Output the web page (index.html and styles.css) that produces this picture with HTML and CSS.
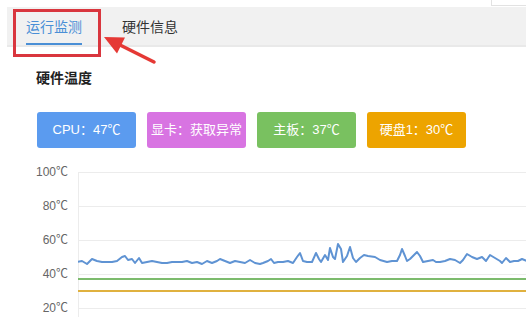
FILE: index.html
```html
<!DOCTYPE html>
<html lang="zh">
<head>
<meta charset="utf-8">
<link rel="stylesheet" href="styles.css">
</head>
<body>
<div class="page">
  <div class="corner-box"></div>
  <div class="tabs">
    <div class="tab active">运行监测</div>
    <div class="tab">硬件信息</div>
  </div>
  <div class="content">
    <h3 class="title">硬件温度</h3>
    <div class="badges">
      <div class="badge b-blue">CPU：47℃</div>
      <div class="badge b-purple">显卡：获取异常</div>
      <div class="badge b-green">主板：37℃</div>
      <div class="badge b-orange">硬盘1：30℃</div>
    </div>
  </div>
  <div class="chart">
    <div class="ylabels">
      <div>100℃</div>
      <div>80℃</div>
      <div>60℃</div>
      <div>40℃</div>
      <div>20℃</div>
    </div>
    <svg class="plot" width="448" height="170" viewBox="0 0 448 170">
      <g stroke="#ececec" stroke-width="1">
        <line x1="0" y1="17.5" x2="448" y2="17.5"/>
        <line x1="0" y1="51.5" x2="448" y2="51.5"/>
        <line x1="0" y1="85.5" x2="448" y2="85.5"/>
        <line x1="0" y1="119.5" x2="448" y2="119.5"/>
        <line x1="0" y1="153.5" x2="448" y2="153.5"/>
        <line x1="0.5" y1="17" x2="0.5" y2="170"/>
      </g>
      <line x1="0" y1="124" x2="448" y2="124" stroke="#7cbb6d" stroke-width="2"/>
      <line x1="0" y1="136" x2="448" y2="136" stroke="#e0b13f" stroke-width="2"/>
      <polyline fill="none" stroke="#5f93d3" stroke-width="2" stroke-linejoin="round"
        points="-1,107 4,106 9,109 14,104 19,106 24,107 34,107 39,106 44,102 47,101 50,105 54,104 57,108 61,103 64,108 69,107 74,106 79,107 84,108 89,108 94,107 104,107 109,106 114,108 119,107 124,109 129,106 134,108 139,106 142,104 147,106 152,108 157,106 162,107 167,108 172,105 177,108 182,109 185,108 190,106 193,104 196,108 200,107 205,107 210,106 215,108 219,102 222,98 225,106 229,107 234,107 238,98 241,104 243,107 247,100 250,105 252,93 255,102 257,104 260,89 263,94 265,107 269,101 272,92 275,103 278,107 282,103 286,100 290,101 297,102 302,105 309,107 314,106 319,106 322,100 324,94 327,101 329,106 332,104 336,100 339,97 342,101 345,107 350,106 355,105 358,107 362,107 367,106 372,104 377,105 382,108 385,105 389,99 394,102 399,104 404,102 408,106 412,100 417,103 422,106 424,108 428,103 432,107 436,106 440,106 444,104 449,106"/>
    </svg>
  </div>

  <div class="annot-box"></div>
  <svg class="annot-arrow" width="60" height="36" viewBox="0 0 60 36">
    <line x1="53" y1="30" x2="17" y2="12" stroke="#e53935" stroke-width="3.5" stroke-linecap="round"/>
    <polygon points="3,5 24,5.5 16,21.5" fill="#e53935"/>
  </svg>
</div>
</body>
</html>
```

FILE: styles.css
```css
* { box-sizing: border-box; }
html, body { margin: 0; padding: 0; background: #fff; }
body {
  font-family: "Microsoft YaHei", "Noto Sans CJK SC", "Liberation Sans", sans-serif;
  color: #333;
  width: 526px;
  height: 317px;
  overflow: hidden;
}
.page {
  position: relative;
  padding: 7px 0 0 7px;
  height: 317px;
}
.corner-box {
  position: absolute;
  left: 491px;
  top: -1px;
  width: 40px;
  height: 7px;
  border: 1px solid #e2e2e2;
  background: #fff;
}
.tabs {
  display: flex;
  gap: 40px;
  height: 40px;
  background: #f1f1f1;
  border-bottom: 2px solid #e9e9e9;
  padding-left: 19px;
}
.tab {
  font-size: 14px;
  line-height: 36px;
  height: 38px;
  color: #333;
  padding-top: 1px;
}
.tab.active {
  color: #4a8fd6;
  border-bottom: 2px solid #4a8fd6;
}
.content {
  padding: 20px 0 0 29px;
}
.title {
  margin: 0;
  font-size: 14px;
  font-weight: bold;
  color: #222;
  line-height: 20px;
}
.badges {
  display: flex;
  gap: 11px;
  margin-top: 25px;
  padding-left: 1px;
}
.badge {
  width: 99px;
  height: 36px;
  line-height: 36px;
  text-align: center;
  color: #fff;
  font-size: 13px;
  border-radius: 3px;
  font-family: "Liberation Sans", "Noto Sans CJK SC", sans-serif;
}
.b-blue { background: #5b9bef; }
.b-purple { background: #d874e2; }
.b-green { background: #79c160; }
.b-orange { background: #eda400; }
.chart {
  display: flex;
  margin-top: 7px;
}
.ylabels {
  width: 71px;
  padding-right: 10px;
  text-align: right;
  font-size: 12px;
  color: #666;
  font-family: "Liberation Sans", "Noto Sans CJK SC", sans-serif;
}
.ylabels div {
  height: 34px;
  line-height: 34px;
}
.plot {
  display: block;
  flex: none;
}
.annot-box {
  position: absolute;
  left: 13px;
  top: 9px;
  width: 88px;
  height: 48px;
  border: 3px solid #d9363e;
}
.annot-arrow {
  position: absolute;
  left: 101px;
  top: 32px;
}
```
